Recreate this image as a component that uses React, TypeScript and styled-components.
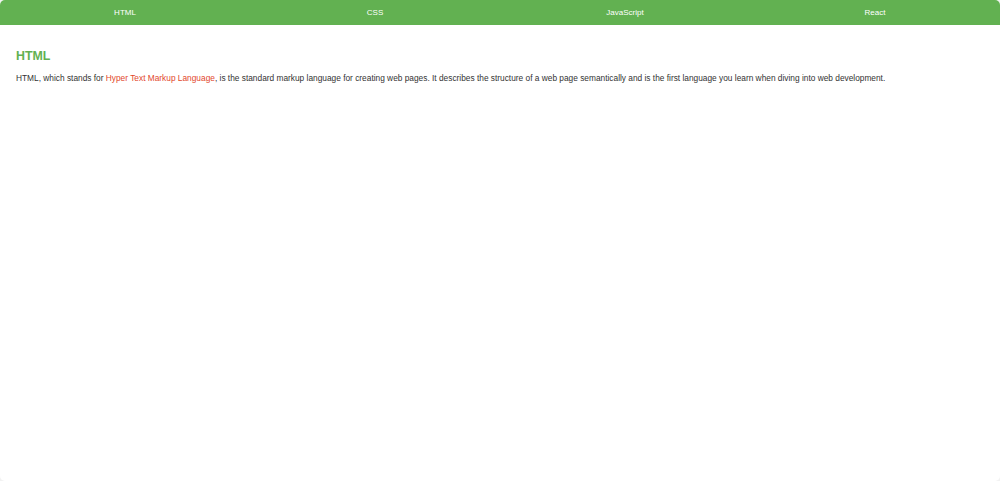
import styled, { createGlobalStyle } from 'styled-components'

const GlobalStyle = createGlobalStyle`
  html, body {
    margin: 0;
    padding: 0;
    background: #f2f2f2;
  }
  body {
    font-family: "Liberation Sans", Arial, sans-serif;
  }
`

const Page = styled.div`
  height: 481px;
  background: #ffffff;
  border-radius: 5px;
  overflow: hidden;
`

const Nav = styled.nav`
  display: flex;
  height: 25px;
  background: #62b151;
`

const NavItem = styled.a`
  flex: 1;
  display: flex;
  align-items: center;
  justify-content: center;
  color: #ffffff;
  font-size: 8px;
  text-decoration: none;
  cursor: pointer;
`

const Content = styled.section`
  padding: 24px 16px;
`

const Title = styled.h2`
  margin: 0 0 9px;
  color: #62b151;
  font-size: 12.4px;
  font-weight: 700;
`

const Text = styled.p`
  margin: 0;
  color: #333333;
  font-size: 8.33px;
  line-height: 12px;
`

const Highlight = styled.span`
  color: #e2472c;
`

const tabs = ['HTML', 'CSS', 'JavaScript', 'React']

export default function App() {
  return (
    <>
      <GlobalStyle />
      <Page>
        <Nav>
          {tabs.map(t => (
            <NavItem key={t}>{t}</NavItem>
          ))}
        </Nav>
        <Content>
          <Title>HTML</Title>
          <Text>
            HTML, which stands for <Highlight>Hyper Text Markup Language</Highlight>, is the standard markup
            language for creating web pages. It describes the structure of a web page semantically and is the
            first language you learn when diving into web development.
          </Text>
        </Content>
      </Page>
    </>
  )
}
